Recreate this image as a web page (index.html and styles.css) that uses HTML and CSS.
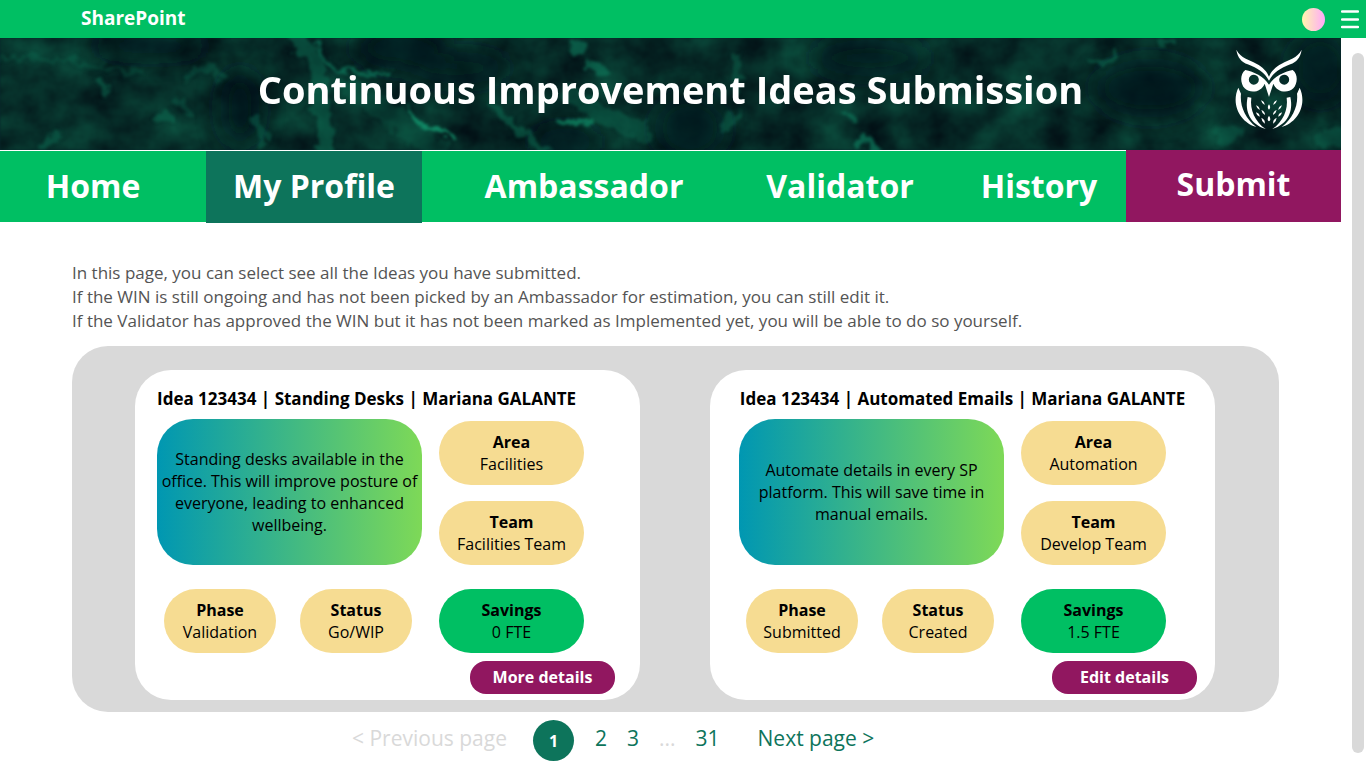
FILE: index.html
```html
<!DOCTYPE html>
<html lang="en">
<head>
    <meta charset="UTF-8">
    <meta name="viewport" content="width=device-width, initial-scale=1.0">
    <title>Continuous Improvement Ideas Submission</title>
    <link rel="stylesheet" href="styles.css">
</head>
<body>
    <header class="topbar">
        <a class="brand" href="#">SharePoint</a>
        <div class="topbar-tools">
            <span class="avatar"></span>
            <button class="menu-button" type="button" aria-label="Menu">
                <svg width="18" height="20" viewBox="0 0 18 20"><path d="M1 2.5h16M1 10.5h16M1 18h16" stroke="#fff" stroke-width="2.4" stroke-linecap="round"/></svg>
            </button>
        </div>
    </header>

    <div class="layout">
        <div class="page">
            <div class="hero">
                <svg class="marble" viewBox="0 0 1341 112" preserveAspectRatio="none" aria-hidden="true">
                    <defs>
                        <filter id="clouds" x="0" y="0" width="100%" height="100%" color-interpolation-filters="sRGB">
                            <feTurbulence type="fractalNoise" baseFrequency="0.022 0.026" numOctaves="5" seed="8"/>
                            <feColorMatrix type="matrix" values="0.05 0 0 0 0  0.34 0 0 0 0.01  0.22 0 0 0 0.05  0 0 0 0 1"/>
                            <feGaussianBlur stdDeviation="1"/>
                        </filter>
                        <filter id="smudge" x="-20%" y="-20%" width="140%" height="140%" color-interpolation-filters="sRGB">
                            <feTurbulence type="fractalNoise" baseFrequency="0.09" numOctaves="3" seed="3"/>
                            <feDisplacementMap in="SourceGraphic" scale="16" xChannelSelector="R" yChannelSelector="G"/>
                            <feGaussianBlur stdDeviation="1.8"/>
                        </filter>
                        <filter id="haze" x="-20%" y="-20%" width="140%" height="140%">
                            <feGaussianBlur stdDeviation="12"/>
                        </filter>
                    </defs>
                    <rect width="1341" height="112" filter="url(#clouds)"/>
                    <g filter="url(#haze)" fill="#04191a" opacity=".75">
                        <ellipse cx="150" cy="8" rx="60" ry="10"/>
                        <ellipse cx="240" cy="70" rx="20" ry="40"/>
                        <ellipse cx="400" cy="10" rx="46" ry="22"/>
                        <ellipse cx="460" cy="30" rx="50" ry="16"/>
                        <ellipse cx="565" cy="104" rx="36" ry="14"/>
                        <ellipse cx="690" cy="90" rx="36" ry="34"/>
                        <ellipse cx="870" cy="20" rx="60" ry="18"/>
                        <ellipse cx="1150" cy="50" rx="56" ry="30"/>
                        <ellipse cx="1320" cy="30" rx="30" ry="36"/>
                    </g>
                    <g filter="url(#smudge)" fill="none" stroke="#0d7a5c" stroke-linecap="round">
                        <path d="M296 0L318 26L320 64L326 112" stroke-width="16" opacity=".45"/>
                        <path d="M314 2L322 16L336 32L360 34L388 36" stroke-width="4" opacity=".7"/>
                        <path d="M408 70L420 86L440 94L456 102" stroke-width="4" stroke="#14a377" opacity=".75"/>
                        <path d="M350 50Q370 60 400 84T440 112" stroke-width="22" opacity=".22"/>
                        <path d="M574 8L580 12M590 26L606 34" stroke-width="7" opacity=".6"/>
                        <path d="M490 68L520 92L545 112" stroke-width="8" opacity=".45"/>
                        <path d="M560 82L594 86" stroke-width="6" stroke="#0f8f68" opacity=".7"/>
                        <path d="M570 55L600 76L642 94" stroke-width="18" opacity=".35"/>
                        <path d="M722 92L736 78M736 20L738 50" stroke-width="8" opacity=".35"/>
                        <path d="M846 74L852 80" stroke-width="5" opacity=".6"/>
                        <path d="M858 106L868 102L876 112" stroke-width="9" opacity=".7"/>
                        <path d="M1090 24L1110 26L1116 12M1160 8L1172 4" stroke-width="6" opacity=".45"/>
                        <path d="M160 80L166 78M100 44L106 52" stroke-width="9" opacity=".45"/>
                        <path d="M184 42Q210 20 222 40M176 62L190 76" stroke-width="6" opacity=".3"/>
                        <path d="M256 80L264 104M44 108L60 98" stroke-width="8" opacity=".4"/>
                        <path d="M1222 98L1234 94M1322 102L1341 98" stroke-width="16" opacity=".3"/>
                        <path d="M0 20L60 22L140 34" stroke-width="4" opacity=".25"/>
                    </g>
                </svg>
                <h1 class="hero-title">Continuous Improvement Ideas Submission</h1>
                <svg class="owl" width="68" height="82" viewBox="74 38 204 246" fill="#fff" role="img" aria-label="Owl logo">
                    <path d="M78 40C92 66 116 70 138 82C158 92 170 106 176 121C182 106 194 92 214 82C236 70 260 66 274 40C270 66 258 76 240 84C210 96 190 108 176 133C162 108 142 96 112 84C94 76 82 66 78 40Z"/>
                    <path fill-rule="evenodd" d="M105 101C88 114 90 142 103 156C122 174 154 166 163 142L176 182L189 142C198 166 230 174 249 156C262 142 264 114 247 101C222 106 192 120 176 145C160 120 130 106 105 101ZM131 115A15 15 0 1 1 130 145A15 15 0 1 1 131 115ZM221 115A15 15 0 1 0 222 145A15 15 0 1 0 221 115Z"/>
                    <path d="M84 154L92 172C88 208 104 246 138 272C92 260 60 206 84 154ZM268 154L260 172C264 208 248 246 214 272C260 260 292 206 268 154Z"/>
                    <path d="M112 182L123 184C118 220 134 256 166 278C120 264 102 226 112 182ZM240 182L229 184C234 220 218 256 186 278C232 264 250 226 240 182Z"/>
                    <path d="M152 192Q163 196 163 206Q155 203 152 192ZM200 192Q189 196 189 206Q197 203 200 192ZM176 204Q183 214 176 220Q169 214 176 204ZM137 207Q148 211 148 221Q140 218 137 207ZM215 207Q204 211 204 221Q212 218 215 207ZM153 221Q164 225 164 236Q155 232 153 221ZM199 221Q188 225 188 236Q197 232 199 221ZM137 228Q148 231 148 241Q140 239 137 228ZM215 228Q204 231 204 241Q212 239 215 228ZM176 238Q184 250 176 255Q168 250 176 238ZM153 244Q166 250 163 262Q154 256 153 244ZM199 244Q186 250 189 262Q198 256 199 244Z"/>
                </svg>
            </div>

            <nav class="nav">
                <a class="nav-home" href="#">Home</a>
                <a class="nav-active" href="#">My Profile</a>
                <a href="#">Ambassador</a>
                <a href="#">Validator</a>
                <a class="nav-history" href="#">History</a>
                <a class="nav-submit" href="#">Submit</a>
            </nav>

            <main>
                <p class="intro">
                    In this page, you can select see all the Ideas you have submitted.<br>
                    If the WIN is still ongoing and has not been picked by an Ambassador for estimation, you can still edit it.<br>
                    If the Validator has approved the WIN but it has not been marked as Implemented yet, you will be able to do so yourself.
                </p>

                <section class="panel">
                    <article class="card">
                        <h2 class="card-title">Idea 123434 | Standing Desks | Mariana GALANTE</h2>
                        <div class="card-body">
                            <div class="card-grid">
                                <p class="description">Standing desks available in the office. This will improve posture of everyone, leading to enhanced wellbeing.</p>
                                <div class="side">
                                    <div class="chip"><strong>Area</strong><span>Facilities</span></div>
                                    <div class="chip"><strong>Team</strong><span>Facilities Team</span></div>
                                </div>
                                <div class="progress">
                                    <div class="chip"><strong>Phase</strong><span>Validation</span></div>
                                    <div class="chip"><strong>Status</strong><span>Go/WIP</span></div>
                                </div>
                                <div class="chip chip-green"><strong>Savings</strong><span>0 FTE</span></div>
                            </div>
                            <button class="details-button" type="button">More details</button>
                        </div>
                    </article>

                    <article class="card card-editable">
                        <h2 class="card-title">Idea 123434 | Automated Emails | Mariana GALANTE</h2>
                        <div class="card-body">
                            <div class="card-grid">
                                <p class="description">Automate details in every SP platform. This will save time in manual emails.</p>
                                <div class="side">
                                    <div class="chip"><strong>Area</strong><span>Automation</span></div>
                                    <div class="chip"><strong>Team</strong><span>Develop Team</span></div>
                                </div>
                                <div class="progress">
                                    <div class="chip"><strong>Phase</strong><span>Submitted</span></div>
                                    <div class="chip"><strong>Status</strong><span>Created</span></div>
                                </div>
                                <div class="chip chip-green"><strong>Savings</strong><span>1.5 FTE</span></div>
                            </div>
                            <button class="details-button" type="button">Edit details</button>
                        </div>
                    </article>
                </section>

                <nav class="pager" aria-label="Pages">
                    <span class="pager-off">&lt; Previous page</span>
                    <a class="pager-current" href="#" aria-current="page">1</a>
                    <div class="pager-pages">
                        <a href="#">2</a>
                        <a href="#">3</a>
                        <span class="pager-off">...</span>
                        <a href="#">31</a>
                    </div>
                    <a class="pager-next" href="#">Next page &gt;</a>
                </nav>
            </main>
        </div>

        <div class="scroll-rail"><div class="scroll-thumb"></div></div>
    </div>
</body>
</html>
```

FILE: styles.css
```css
* {
    box-sizing: border-box;
}

body {
    font-family: "Open Sans", sans-serif;
    font-size: 16px;
    line-height: 22px;
    margin: 0;
    min-height: 100vh;
    display: flex;
    flex-direction: column;
    background: #fff;
    color: #000;
}

a {
    text-decoration: none;
    color: inherit;
}

.topbar {
    height: 38px;
    padding: 0 7px 0 81px;
    background: #00bf63;
    display: flex;
    align-items: center;
    justify-content: space-between;
}

.brand {
    padding-bottom: 2px;
    color: #fff;
    font-size: 19px;
    font-weight: 700;
}

.topbar-tools {
    display: flex;
    align-items: center;
    gap: 16px;
}

.avatar {
    width: 23px;
    height: 23px;
    border-radius: 50%;
    background: linear-gradient(90deg, #fff7ad, #ffa9f9);
}

.menu-button {
    display: flex;
    padding: 0;
    border: 0;
    background: none;
    cursor: pointer;
}

.layout {
    flex: 1;
    display: flex;
}

.page {
    flex: 1;
    min-width: 0;
}

.scroll-rail {
    width: 25px;
    padding: 15px 2px 15px 11px;
    display: flex;
}

.scroll-thumb {
    flex: 1;
    border-radius: 6px;
    background: #d9d9d9;
}

.hero {
    position: relative;
    height: 112px;
    padding: 0 38px 8px;
    overflow: hidden;
    display: grid;
    grid-template-columns: 1fr auto 1fr;
    align-items: center;
    background: #08262a;
}

.marble {
    position: absolute;
    top: 0;
    left: 0;
    width: 100%;
    height: 100%;
}

.hero-title {
    position: relative;
    grid-column: 2;
    margin: 0;
    padding-bottom: 2px;
    color: #fff;
    font-size: 38px;
    line-height: 52px;
    font-weight: 700;
    white-space: nowrap;
}

.owl {
    position: relative;
    justify-self: end;
}

.nav {
    display: grid;
    grid-template-columns: 206fr 216fr 324fr 188fr 192fr 215fr;
    height: 71px;
    margin-top: 1px;
    background: #00bf63;
    color: #fff;
    font-size: 32px;
    font-weight: 700;
}

.nav a {
    display: flex;
    align-items: center;
    justify-content: center;
    padding-bottom: 2px;
}

.nav .nav-home {
    padding-right: 20px;
}

.nav .nav-history {
    padding-left: 18px;
}

.nav .nav-active {
    height: 72px;
    background: #0d745b;
}

.nav .nav-submit {
    position: relative;
    margin: -1px 0 1px;
    padding-bottom: 4px;
    background: #911760;
}

main {
    padding: 39px 62px 0 72px;
}

.intro {
    margin: 0 0 13px;
    color: #545454;
    font-size: 17px;
    line-height: 24px;
}

.panel {
    display: flex;
    gap: 70px;
    padding: 24px 64px 12px 63px;
    border-radius: 36px;
    background: #d9d9d9;
}

.card {
    flex: 1;
    min-width: 0;
    padding: 17px 0 6px;
    border-radius: 36px;
    background: #fff;
}

.card-title {
    margin: 0 0 8px;
    padding-left: 22px;
    font-size: 17px;
    line-height: 24px;
    font-weight: 700;
    white-space: nowrap;
}

.card-editable .card-title {
    padding-left: 0;
    text-align: center;
}

.card-body {
    display: flex;
    flex-direction: column;
    padding: 0 25px 0 22px;
}

.card-editable .card-body {
    padding: 0 18px 0 29px;
}

.card-grid {
    display: grid;
    grid-template-columns: 265fr 145fr;
    gap: 24px 17px;
    padding-right: 31px;
}

.description {
    display: flex;
    align-items: center;
    min-height: 146px;
    margin: 0;
    padding: 0 4px;
    border-radius: 36px;
    background: linear-gradient(90deg, #0097b2, #7ed957);
    text-align: center;
}

.side {
    display: flex;
    flex-direction: column;
    justify-content: flex-end;
    gap: 16px;
}

.progress {
    display: flex;
    gap: 24px;
    padding: 0 10px 0 7px;
}

.chip {
    display: flex;
    flex-direction: column;
    align-items: center;
    justify-content: center;
    height: 64px;
    border-radius: 32px;
    background: #f6dc92;
}

.progress .chip {
    flex: 1;
}

.chip-green {
    background: #00bf63;
}

.details-button {
    align-self: flex-end;
    width: 145px;
    height: 33px;
    margin-top: 8px;
    padding: 0 0 2px;
    border: 0;
    border-radius: 16px;
    background: #911760;
    color: #fff;
    font: inherit;
    font-weight: 700;
    cursor: pointer;
}

.pager {
    display: flex;
    margin-top: 8px;
    padding-left: 280px;
    color: #0d745b;
    font-size: 21px;
    line-height: 36px;
}

.pager-off {
    color: #d9d9d9;
}

.pager-current {
    width: 41px;
    height: 41px;
    margin: 0 21px 0 26px;
    border-radius: 50%;
    background: #0d745b;
    color: #fff;
    font-size: 16px;
    line-height: 42px;
    font-weight: 700;
    text-align: center;
}

.pager-pages {
    display: flex;
    gap: 20px;
    margin-right: 38px;
}
```
